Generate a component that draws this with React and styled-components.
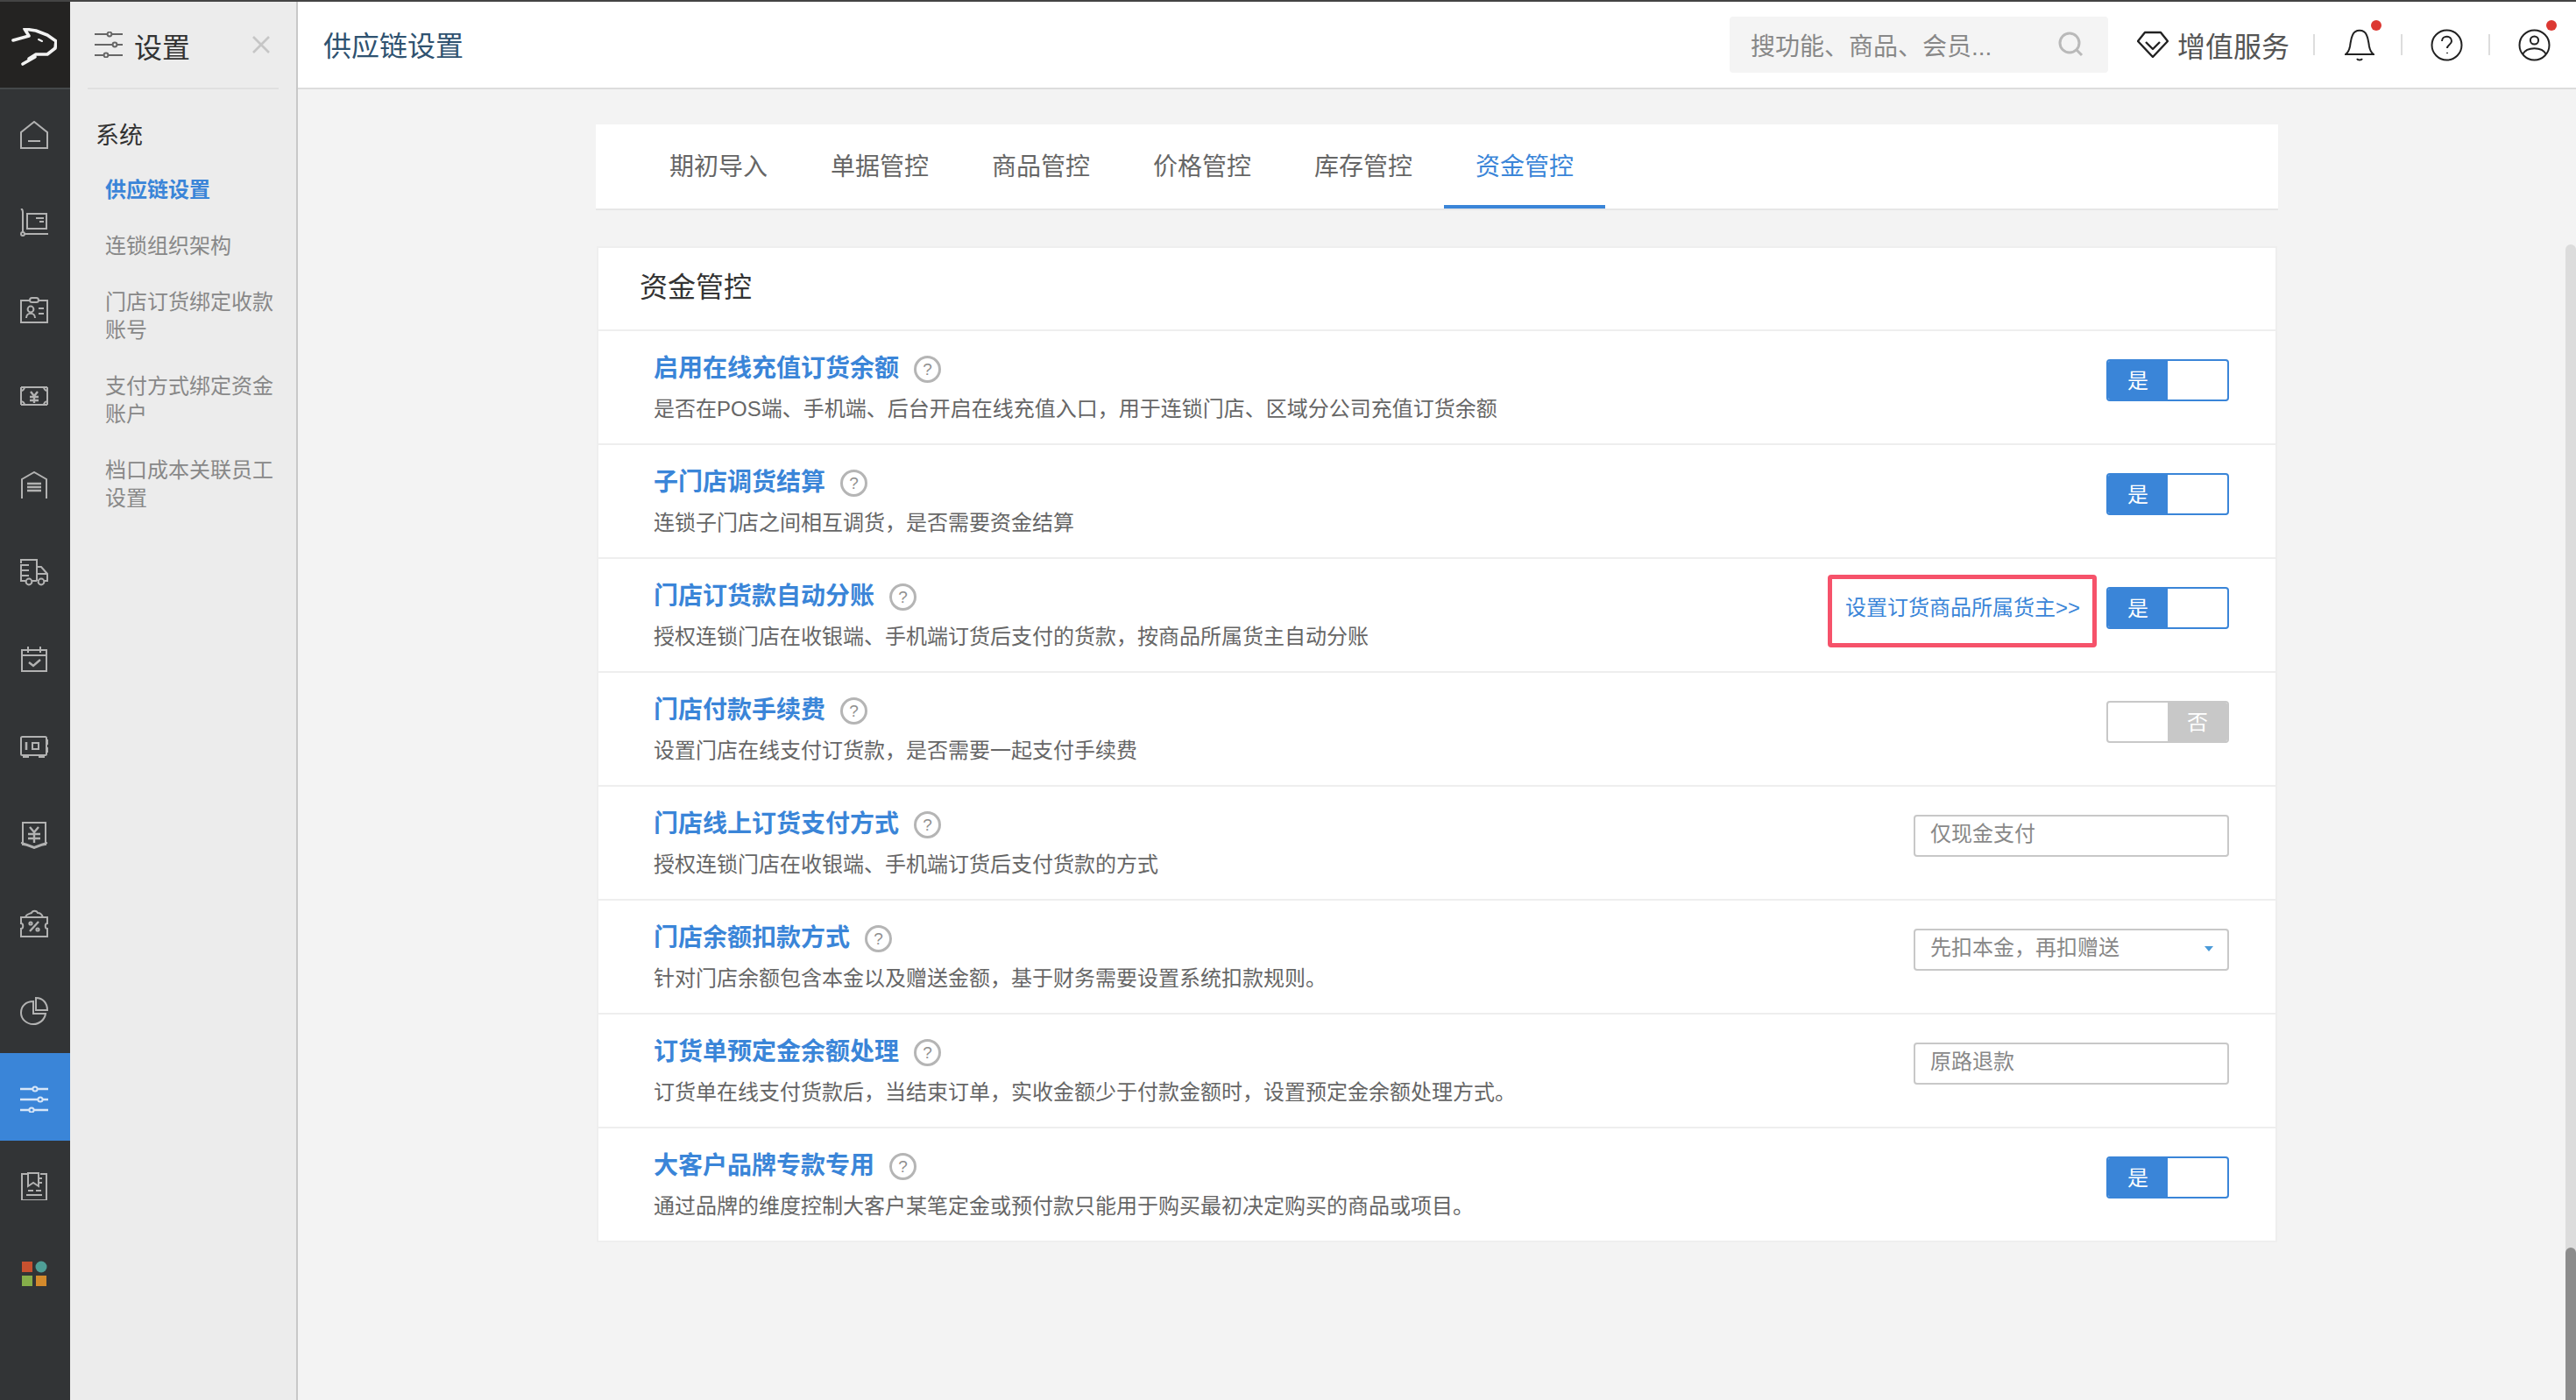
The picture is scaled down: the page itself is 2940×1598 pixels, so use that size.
import React from 'react'
import styled, {createGlobalStyle} from 'styled-components'

const GlobalStyle = createGlobalStyle`
  html, body {
    margin: 0;
    padding: 0;
    height: 100%;
    overflow: hidden;
  }
  body {
    font-family: "Liberation Sans", "Noto Sans CJK SC", sans-serif;
    background: #f3f3f3;
  }
  * {
    box-sizing: border-box;
  }
`

const railIcons = [
    <>
        <path d="M1 31V13L16 1l15 12v18z"/>
        <path d="M9 23h14"/>
    </>,
    <>
        <path d="M1 0c2 1 2 2 2 4v24"/>
        <circle cx="3" cy="29" r="2"/>
        <path d="M5 29h27"/>
        <path d="M8 6h22v17H8z"/>
        <path d="M18 11h9M22 15h5"/>
    </>,
    <>
        <path d="M11 5H1v25h30V5H21"/>
        <rect x="11" y="2" width="10" height="5" rx="2.5"/>
        <circle cx="12" cy="15" r="3.4"/>
        <path d="M7 25c0-7 10-7 10 0"/>
        <path d="M21 14h6M21 20h6"/>
    </>,
    <>
        <path d="M5 4h22c0 2 2 4 4 4v12c-2 0-4 2-4 4H5c0-2-2-4-4-4V8c2 0 4-2 4-4z"/>
        <path d="M1 4h4M27 4h4M1 24h4M27 24h4M1 4v4M31 4v4M1 20v4M31 20v4"/>
        <path d="M12 9l4 5 4-5M11 15h10M11 19h10M16 14v8" strokeWidth="2.4"/>
    </>,
    <>
        <path d="M2 31V9L16 1l14 8v22"/>
        <path d="M8 14h16M8 18h16M8 22h16" strokeWidth="2.6"/>
    </>,
    <>
        <path d="M1 5V1h18v24M19 9h5l7 8v8h-3M19 25h-5M6 25H1V6"/>
        <path d="M19 9v8h12"/>
        <path d="M1 7h9M1 13h9M1 19h9"/>
        <circle cx="10" cy="26" r="3.4"/>
        <circle cx="24" cy="26" r="3.4"/>
    </>,
    <>
        <rect x="2" y="4" width="28" height="24"/>
        <path d="M2 10h28M9 0v7M23 0v7"/>
        <path d="M10 18l5 4 8-7" strokeWidth="2.4"/>
    </>,
    <>
        <rect x="1" y="3" width="29" height="21" rx="1.5"/>
        <path d="M30 7h2v4h-2M30 16h2v4h-2M4 24v2h5v-2M22 24v2h5v-2"/>
        <path d="M7 9v9" strokeWidth="2.6"/>
        <rect x="14" y="10" width="7" height="7"/>
    </>,
    <>
        <path d="M3 1h26v25c-4 0-8 2-13 4-5-2-9-4-13-4z"/>
        <path d="M1 24c5 1 10 3 15 5 5-2 10-4 15-5"/>
        <path d="M11 6l5 6 5-6M9 14h14M9 19h14M16 12v12" strokeWidth="2.4"/>
    </>,
    <>
        <path d="M1 9h30v7c-3 0-3 6 0 6v9H1v-9c3 0 3-6 0-6z"/>
        <path d="M6 9c1-4 5-4 7-5 1-3 6-3 7 0 3 0 5 2 6 5"/>
        <path d="M21 14L11 25" strokeWidth="2.4"/>
        <circle cx="12" cy="16" r="1.6"/>
        <circle cx="20" cy="23" r="1.6"/>
    </>,
    <>
        <path d="M15 5C7 5 1 10 1 18c0 7 6 13 14 13 7 0 13-5 14-12H15z"/>
        <path d="M18 1v14h13C31 7 26 1 18 1z"/>
    </>,
    <>
        <path d="M0 5h32M0 17h32M0 29h32" strokeWidth="2.4"/>
        <circle cx="17" cy="5" r="2.6" fill="#3a85d8"/>
        <circle cx="23" cy="17" r="2.6" fill="#3a85d8"/>
        <circle cx="13" cy="29" r="2.6" fill="#3a85d8"/>
    </>,
    <>
        <path d="M9 2H2v30h28V2h-7"/>
        <path d="M9 1h12v15l-6-4-6 4z"/>
        <path d="M21 7h4M21 12h4M9 21h6M18 21h6M7 26h18"/>
    </>,
    <>
        <rect x="2" y="2" width="12" height="12" fill="#c8512f" stroke="none"/>
        <circle cx="24" cy="8" r="6.5" fill="#4f9f97" stroke="none"/>
        <rect x="2" y="18" width="12" height="12" fill="#86ae4a" stroke="none"/>
        <rect x="18" y="18" width="12" height="12" fill="#d48a2c" stroke="none"/>
    </>,
]

const navItems = [
    {label: '供应链设置', active: true},
    {label: '连锁组织架构'},
    {label: '门店订货绑定收款账号'},
    {label: '支付方式绑定资金账户'},
    {label: '档口成本关联员工设置'},
]

const tabs = ['期初导入', '单据管控', '商品管控', '价格管控', '库存管控', '资金管控']

const rows = [
    {
        title: '启用在线充值订货余额',
        desc: '是否在POS端、手机端、后台开启在线充值入口，用于连锁门店、区域分公司充值订货余额',
        control: 'on',
    },
    {title: '子门店调货结算', desc: '连锁子门店之间相互调货，是否需要资金结算', control: 'on'},
    {
        title: '门店订货款自动分账',
        desc: '授权连锁门店在收银端、手机端订货后支付的货款，按商品所属货主自动分账',
        control: 'on',
        link: '设置订货商品所属货主>>',
    },
    {title: '门店付款手续费', desc: '设置门店在线支付订货款，是否需要一起支付手续费', control: 'off'},
    {title: '门店线上订货支付方式', desc: '授权连锁门店在收银端、手机端订货后支付货款的方式', control: 'input', value: '仅现金支付'},
    {
        title: '门店余额扣款方式',
        desc: '针对门店余额包含本金以及赠送金额，基于财务需要设置系统扣款规则。',
        control: 'select',
        value: '先扣本金，再扣赠送',
    },
    {
        title: '订货单预定金余额处理',
        desc: '订货单在线支付货款后，当结束订单，实收金额少于付款金额时，设置预定金余额处理方式。',
        control: 'input',
        value: '原路退款',
    },
    {
        title: '大客户品牌专款专用',
        desc: '通过品牌的维度控制大客户某笔定金或预付款只能用于购买最初决定购买的商品或项目。',
        control: 'on',
    },
]

function Control({row}) {
    if (row.control === 'on') {
        return (
            <Switch $on>
                <SwitchLabel $on>是</SwitchLabel>
                <SwitchBlank/>
            </Switch>
        )
    }
    if (row.control === 'off') {
        return (
            <Switch>
                <SwitchBlank/>
                <SwitchLabel>否</SwitchLabel>
            </Switch>
        )
    }
    return (
        <Field>
            {row.value}
            {row.control === 'select' && <Caret/>}
        </Field>
    )
}

function App() {
    return (
        <Page>
            <GlobalStyle/>
            <TopStrip/>
            <Body>
                <Rail>
                    <LogoBox>
                        <svg width="52" height="44" viewBox="0 0 52 44" fill="none" stroke="#f2f2f2" strokeWidth="3.6"
                             strokeLinejoin="round" strokeLinecap="round">
                            <path d="M2 14l18-5-5-8 13 2 13 5 10 7-1 8-9 7H28l-8 5 7-2-14 8"/>
                            <path d="M31 13l4 2" strokeWidth="2"/>
                        </svg>
                    </LogoBox>
                    {railIcons.map((icon, i) => (
                        <RailItem key={i} $active={i === 11}>
                            <svg width="32" height="32" viewBox="0 0 32 32" fill="none"
                                 stroke={i === 11 ? '#d6e6f8' : '#b2b2b2'} strokeWidth="2">
                                {icon}
                            </svg>
                        </RailItem>
                    ))}
                </Rail>

                <SubNav>
                    <SubNavHeader>
                        <svg width="32" height="30" viewBox="0 0 32 30" fill="none" stroke="#666" strokeWidth="2">
                            <path d="M0 3h32M0 15h32M0 27h32"/>
                            <circle cx="17" cy="3" r="2.4" fill="#ececec"/>
                            <circle cx="23" cy="15" r="2.4" fill="#ececec"/>
                            <circle cx="13" cy="27" r="2.4" fill="#ececec"/>
                        </svg>
                        <SubNavTitle>设置</SubNavTitle>
                        <CloseIcon width="20" height="20" viewBox="0 0 20 20" stroke="#c6c6c6" strokeWidth="2.6">
                            <path d="M1 1l18 18M19 1L1 19"/>
                        </CloseIcon>
                    </SubNavHeader>
                    <GroupTitle>系统</GroupTitle>
                    {navItems.map(item => (
                        <NavItem key={item.label} $active={item.active}>{item.label}</NavItem>
                    ))}
                </SubNav>

                <Content>
                    <Header>
                        <HeaderTitle>供应链设置</HeaderTitle>
                        <Search>
                            搜功能、商品、会员...
                            <svg width="30" height="30" viewBox="0 0 30 30" fill="none" stroke="#b9b9b9" strokeWidth="3">
                                <circle cx="13" cy="13" r="11"/>
                                <path d="M21 21l6 6"/>
                            </svg>
                        </Search>
                        <ServiceLink>
                            <svg width="36" height="32" viewBox="0 0 36 32" fill="none" stroke="#222" strokeWidth="2.4"
                                 strokeLinejoin="round">
                                <path d="M9 2h18l8 10-17 18L1 12z"/>
                                <path d="M10 13l8 8 8-8"/>
                            </svg>
                            增值服务
                        </ServiceLink>
                        <HeaderDivider/>
                        <HeaderSlot>
                            <svg width="34" height="37" viewBox="0 0 34 37" fill="none" stroke="#222" strokeWidth="2">
                                <path d="M1 29c3-2 4-4 5-9 1-6 1-9 3-13 3-7 13-7 16 0 2 4 2 7 3 13 1 5 2 7 5 9z"/>
                                <path d="M14 34c1 2 5 2 6 0"/>
                            </svg>
                            <RedDot/>
                        </HeaderSlot>
                        <HeaderDivider/>
                        <HeaderSlot>
                            <svg width="37" height="37" viewBox="0 0 37 37" fill="none" stroke="#222" strokeWidth="2">
                                <circle cx="18.5" cy="18.5" r="17"/>
                                <path d="M13 14c0-7 11-7 11 0 0 4-5 4-5 8"/>
                                <path d="M19 27v1"/>
                            </svg>
                        </HeaderSlot>
                        <HeaderDivider/>
                        <HeaderSlot>
                            <svg width="37" height="37" viewBox="0 0 37 37" fill="none" stroke="#222" strokeWidth="2">
                                <circle cx="18.5" cy="18.5" r="17"/>
                                <circle cx="18.5" cy="13" r="4.6"/>
                                <path d="M5 29c5-9 22-9 27 0"/>
                            </svg>
                            <RedDot/>
                        </HeaderSlot>
                    </Header>

                    <Main>
                        <TabBar>
                            {tabs.map(tab => (
                                <Tab key={tab} $active={tab === '资金管控'}>{tab}</Tab>
                            ))}
                        </TabBar>
                        <Panel>
                            <PanelTitle>资金管控</PanelTitle>
                            {rows.map(row => (
                                <Row key={row.title}>
                                    <RowText>
                                        <RowTitle>
                                            {row.title}
                                            <HelpMark>?</HelpMark>
                                        </RowTitle>
                                        <RowDesc>{row.desc}</RowDesc>
                                    </RowText>
                                    {row.link && <OwnerLink>{row.link}</OwnerLink>}
                                    <Control row={row}/>
                                </Row>
                            ))}
                        </Panel>
                        <ScrollTrack>
                            <ScrollThumb/>
                        </ScrollTrack>
                    </Main>
                </Content>
            </Body>
        </Page>
    )
}

const Page = styled.div`
  width: 2940px;
  height: 1598px;
  display: flex;
  flex-direction: column;
  overflow: hidden;
`

const TopStrip = styled.div`
  height: 2px;
  background: #444;
  flex: none;
`

const Body = styled.div`
  flex: 1;
  display: flex;
  min-height: 0;
`

const Rail = styled.nav`
  width: 80px;
  flex: none;
  background: #323436;
`

const LogoBox = styled.div`
  height: 100px;
  background: #242322;
  border-bottom: 2px solid #45484a;
  display: flex;
  justify-content: center;
  padding-top: 30px;
  padding-right: 3px;
`

const RailItem = styled.div`
  height: 100px;
  display: flex;
  align-items: center;
  justify-content: center;
  padding: 4px 2px 0 0;
  background: ${p => (p.$active ? '#3a85d8' : 'transparent')};
`

const SubNav = styled.aside`
  width: 260px;
  flex: none;
  background: #ececec;
  border-right: 2px solid #c8c8c8;
  padding: 0 20px;
`

const SubNavHeader = styled.div`
  height: 100px;
  border-bottom: 2px solid #e0e0e0;
  display: flex;
  align-items: center;
  padding-left: 8px;
`

const SubNavTitle = styled.div`
  font-size: 32px;
  color: #333;
  margin-left: 13px;
  padding-top: 2px;
`

const CloseIcon = styled.svg`
  margin-left: auto;
  margin-right: 10px;
`

const GroupTitle = styled.div`
  font-size: 27px;
  line-height: 36px;
  color: #333;
  margin: 35px 0 28px 9px;
`

const NavItem = styled.div`
  width: 200px;
  margin-left: 20px;
  padding-bottom: 32px;
  font-size: 24px;
  line-height: 32px;
  color: ${p => (p.$active ? '#3a85d8' : '#888')};
  font-weight: ${p => (p.$active ? 700 : 400)};
`

const Content = styled.div`
  flex: 1;
  min-width: 0;
  display: flex;
  flex-direction: column;
`

const Header = styled.header`
  height: 100px;
  flex: none;
  background: #fff;
  border-bottom: 2px solid #ddd;
  display: flex;
  align-items: center;
  padding-left: 29px;
`

const HeaderTitle = styled.div`
  font-size: 32px;
  color: #2f5270;
  margin-right: auto;
  padding-bottom: 3px;
`

const Search = styled.div`
  width: 432px;
  height: 64px;
  background: #f4f4f4;
  border-radius: 4px;
  display: flex;
  align-items: center;
  justify-content: space-between;
  padding: 0 27px 0 24px;
  font-size: 28px;
  color: #888;
`

const ServiceLink = styled.div`
  display: flex;
  align-items: center;
  gap: 10px;
  margin: 0 27px 0 33px;
  font-size: 32px;
  color: #555;
`

const HeaderDivider = styled.div`
  width: 2px;
  height: 24px;
  background: #ddd;
  flex: none;
`

const HeaderSlot = styled.div`
  position: relative;
  width: 98px;
  height: 40px;
  padding-left: 3px;
  display: flex;
  align-items: center;
  justify-content: center;
  flex: none;
`

const RedDot = styled.span`
  position: absolute;
  top: -8px;
  left: 64px;
  width: 12px;
  height: 12px;
  border-radius: 50%;
  background: #dc3832;
`

const Main = styled.main`
  position: relative;
  flex: 1;
  min-height: 0;
  background: #f3f3f3;
  padding: 40px 0 0 340px;
`

const TabBar = styled.div`
  width: 1920px;
  height: 98px;
  background: #fff;
  border-bottom: 2px solid #e6e6e6;
  display: flex;
  padding-left: 48px;
`

const Tab = styled.div`
  width: 184px;
  height: 96px;
  padding-top: 29px;
  text-align: center;
  font-size: 28px;
  line-height: 40px;
  color: ${p => (p.$active ? '#3a85d8' : '#666')};
  border-bottom: 4px solid ${p => (p.$active ? '#3a85d8' : 'transparent')};
`

const Panel = styled.section`
  width: 1918px;
  margin: 41px 0 0 1px;
  background: #fff;
  border: 2px solid #eee;
  border-bottom: none;
`

const PanelTitle = styled.h2`
  margin: 0;
  height: 95px;
  border-bottom: 2px solid #eee;
  padding: 22px 0 0 47px;
  font-size: 32px;
  line-height: 46px;
  font-weight: 400;
  color: #333;
`

const Row = styled.div`
  height: 130px;
  border-bottom: 2px solid #eee;
  display: flex;
  align-items: flex-start;
  padding: 0 53px 0 63px;
`

const RowText = styled.div`
  flex: 1;
  min-width: 0;
  padding-top: 23px;
`

const RowTitle = styled.div`
  display: flex;
  align-items: center;
  font-size: 28px;
  line-height: 40px;
  font-weight: 700;
  color: #3a85d8;
`

const HelpMark = styled.span`
  width: 31px;
  height: 31px;
  margin-left: 17px;
  border: 3px solid #b5b5b5;
  border-radius: 50%;
  display: flex;
  align-items: center;
  justify-content: center;
  font-size: 19px;
  line-height: 1;
  font-weight: 400;
  color: #8f8f8f;
`

const RowDesc = styled.div`
  margin-top: 8px;
  font-size: 24px;
  line-height: 36px;
  color: #666;
`

const OwnerLink = styled.a`
  position: relative;
  margin: 34px 30px 0 0;
  font-size: 24px;
  line-height: 44px;
  height: 44px;
  color: #3a85d8;

  &::after {
    content: '';
    position: absolute;
    left: -20px;
    right: -19px;
    top: -16px;
    bottom: -23px;
    border: 5px solid #f6526a;
    border-radius: 4px;
  }
`

const Switch = styled.div`
  width: 140px;
  height: 48px;
  margin-top: 32px;
  flex: none;
  display: flex;
  background: #fff;
  border: 2px solid ${p => (p.$on ? '#3a85d8' : '#c8c8c8')};
  border-radius: 4px;
  overflow: hidden;
`

const SwitchLabel = styled.div`
  width: 68px;
  display: flex;
  align-items: center;
  justify-content: center;
  padding-bottom: 3px;
  font-size: 24px;
  color: #fff;
  background: ${p => (p.$on ? '#3a85d8' : '#c8c8c8')};
`

const SwitchBlank = styled.div`
  flex: 1;
`

const Field = styled.div`
  position: relative;
  width: 360px;
  height: 48px;
  margin-top: 32px;
  flex: none;
  padding-left: 17px;
  border: 2px solid #c8c8c8;
  border-radius: 4px;
  font-size: 24px;
  line-height: 40px;
  color: #888;
`

const Caret = styled.span`
  position: absolute;
  right: 16px;
  top: 18px;
  border-left: 5px solid transparent;
  border-right: 5px solid transparent;
  border-top: 6px solid #4a9ad8;
`

const ScrollTrack = styled.div`
  position: absolute;
  right: 0;
  top: 177px;
  bottom: 0;
  width: 12px;
  background: #dcdcdc;
  border-radius: 6px 6px 0 0;
`

const ScrollThumb = styled.div`
  position: absolute;
  left: 0;
  right: 0;
  bottom: 0;
  height: 174px;
  background: #8c8c8c;
  border-radius: 6px 6px 0 0;
`

export default App
